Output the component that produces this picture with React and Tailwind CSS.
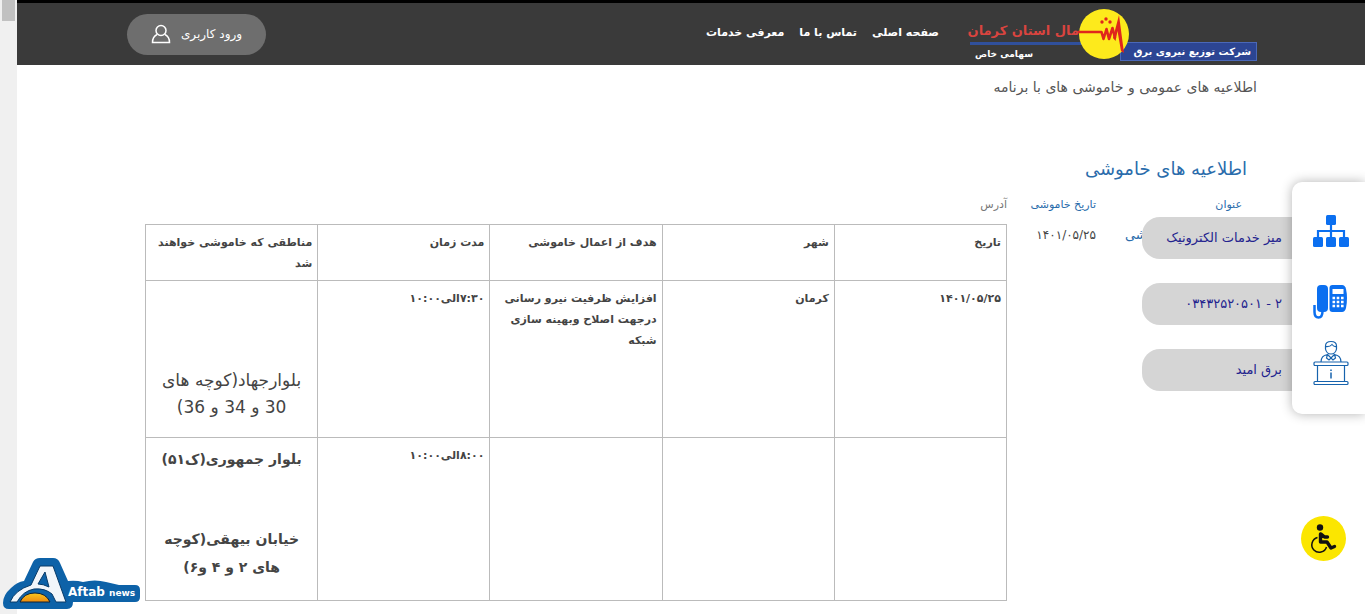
const navLinks = ["صفحه اصلی", "تماس با ما", "معرفی خدمات"];

const columns = [
  "تاریخ",
  "شهر",
  "هدف از اعمال خاموشی",
  "مدت زمان",
  "مناطقی که خاموشی خواهند شد",
];

const Logo = () => (
  <svg width="289" height="53" viewBox="968 7 289 53" role="img" aria-label="شرکت توزیع نیروی برق شمال استان کرمان">
    <rect x="1120.5" y="41.5" width="136" height="18" fill="#2c4593" stroke="#4a68b8" />
    <rect x="970" y="41" width="113" height="3" fill="#30509c" />
    <circle cx="1104" cy="33" r="25" fill="#fdea1c" />
    <path
      d="M1078 31H1101.500L1103.500 38L1106.500 28L1109 38L1112.500 27L1115 37"
      fill="none"
      stroke="#e0261c"
      strokeWidth="2.600"
      strokeLinejoin="round"
    />
    <path d="M1119 14L1124 52L1121 50L1117.500 30L1115.500 40L1113 37Z" fill="#e0261c" />
    <circle cx="1102" cy="21" r="1.700" fill="#e0261c" />
    <circle cx="1106" cy="18" r="1.700" fill="#e0261c" />
    <circle cx="1110" cy="21" r="1.700" fill="#e0261c" />
    <text x="1079" y="34" fill="#d9443f" fontSize="13" fontWeight="bold">مال استان کرمان</text>
    <text x="1251" y="54" fill="#fff" fontSize="10" fontWeight="bold">شرکت توزیع نیروی برق</text>
    <text x="1033" y="56" fill="#fff" fontSize="9" fontWeight="bold">سهامی خاص</text>
  </svg>
);

const UserIcon = () => (
  <svg width="20" height="20" viewBox="0 0 20 20" fill="none" stroke="#fff" strokeWidth="1.500">
    <circle cx="10" cy="6.500" r="5" />
    <path d="M6 10.500C3 12 1.500 14.500 1.500 18.500H18.500C18.500 14.500 17 12 14 10.500" />
  </svg>
);

const SitemapIcon = () => (
  <svg width="36" height="32" viewBox="0 0 36 32" fill="#0b6ff0">
    <rect x="13" y="0" width="10" height="10" rx="1.500" />
    <rect x="0" y="22" width="10" height="10" rx="1.500" />
    <rect x="13" y="22" width="10" height="10" rx="1.500" />
    <rect x="26" y="22" width="10" height="10" rx="1.500" />
    <path d="M5 23V16H31V23M18 9V23" fill="none" stroke="#0b6ff0" strokeWidth="2.200" />
  </svg>
);

const PhoneIcon = () => (
  <svg width="36" height="36" viewBox="0 0 36 36" fill="#0b6ff0">
    <rect x="4" y="2" width="11" height="27" rx="4" />
    <path d="M16.500 5Q16.500 2 19.500 2H29Q32 2 33 6Q35 15 33 25Q32 29 29 29H19.500Q16.500 29 16.500 26Z" />
    <rect x="19.500" y="6" width="11" height="5" fill="#fff" />
    <path
      d="M19.500 15h2.600M23.700 15h2.600M28 15h2.600M19.500 19h2.600M23.700 19h2.600M28 19h2.600M19.500 23h2.600M23.700 23h2.600M28 23h2.600"
      stroke="#fff"
      strokeWidth="2.600"
    />
    <path d="M1.500 22V29Q1.500 34.500 5.500 34.500T9.500 28" fill="none" stroke="#0b6ff0" strokeWidth="2.500" />
  </svg>
);

const DeskIcon = () => (
  <svg width="36" height="46" viewBox="0 0 36 46" fill="none" stroke="#1763ad" strokeWidth="1.200">
    <path d="M12.500 6Q12.500 1.500 18 1.500T23.500 6V9Q22.500 14 18 14T12.500 9ZM12.500 6.500Q17 7 19 4.500Q21 7 23.500 6.500" />
    <path d="M8 22Q8 15.500 14.500 14.500L18 18L21.500 14.500Q28 15.500 28 22M14.500 14.500L13.500 18L16 20L18 18L20 20L22.500 18L21.500 14.500" />
    <rect x="1" y="22" width="34" height="3.500" rx="1" />
    <path d="M4.500 25.500V41.500M31.500 25.500V41.500" />
    <rect x="1" y="41.500" width="34" height="3" rx="1" />
    <path d="M18 32.500V38.500M18 29.500V31" strokeWidth="1.500" />
  </svg>
);

const WheelchairIcon = () => (
  <svg width="45" height="45" viewBox="0 0 45 45">
    <circle cx="22.500" cy="22.500" r="22.500" fill="#fbe600" />
    <circle cx="19" cy="11.500" r="3.200" fill="#111" />
    <path d="M16.500 21.500A7.500 7.500 0 1 0 25.500 31" fill="none" stroke="#111" strokeWidth="1.500" />
    <path
      d="M19.500 18V26H26L30 32L33.500 30.500M20 18L23.500 21H26.500"
      fill="none"
      stroke="#111"
      strokeWidth="3.400"
      strokeLinecap="round"
      strokeLinejoin="round"
    />
  </svg>
);

const AftabLogo = () => (
  <svg width="138" height="54" viewBox="0 0 138 54" role="img" aria-label="Aftab news">
    <defs>
      <linearGradient id="sun" x1="0" y1="0" x2="0" y2="1">
        <stop offset="0" stopColor="#f8c81e" />
        <stop offset="1" stopColor="#ee8a10" />
      </linearGradient>
    </defs>
    <path
      d="M30 5Q32 1 37 1H50Q55 1 57 6L65 24Q73 23 80 25Q92 22 103 25L116 28H132Q137 28 137 33V40Q137 45 132 45H70Q70 52 64 52H6Q0 52 0 46Q0 38 8 31Q14 25 21 24Z"
      fill="#0d62a8"
    />
    <path
      d="M37 9H50L63 45H53L49 37Q42 31 31 32Q20 34 14 45H7Q12 33 28 28ZM42 15L35 27Q40 27 46 30Z"
      fill="#f2f6fa"
      fillRule="evenodd"
      stroke="#083b68"
      strokeWidth="1"
    />
    <path d="M17 45Q21 36 32 36T47 45Z" fill="url(#sun)" stroke="#123" />
    <text x="65" y="39" fill="#fff" fontSize="12" fontWeight="bold" direction="ltr">Aftab</text>
    <text x="106" y="39" fill="#fff" fontSize="9" fontWeight="bold" direction="ltr">news</text>
  </svg>
);

const services = ["میز خدمات الکترونیک", "۲ - ۰۳۴۳۲۵۲۰۵۰۱", "برق امید"];

const Header = () => (
  <header className="flex h-[65px] items-center justify-between border-t-[3px] border-black bg-[#3a3a3a] pr-[108px] pl-[110px]">
    <div className="flex items-center gap-[29px]">
      <a href="#home">
        <Logo />
      </a>
      <nav className="flex gap-[15px] pb-[2px] text-[11px] font-bold text-white">
        {navLinks.map((link) => (
          <a key={link} href="#nav">
            {link}
          </a>
        ))}
      </nav>
    </div>
    <button className="flex h-[41px] w-[139px] items-center justify-center gap-[10px] rounded-full bg-[#6e6e6e] text-[12px] text-white">
      <span>ورود کاربری</span>
      <UserIcon />
    </button>
  </header>
);

const OutageTable = () => (
  <table className="w-full table-fixed border-collapse text-right text-[11px] leading-[21px] font-bold text-[#444]">
    <thead>
      <tr className="h-14 align-top">
        {columns.map((column) => (
          <th key={column} className="border border-[#bbb] px-[5px] pt-[7px]">
            {column}
          </th>
        ))}
      </tr>
    </thead>
    <tbody>
      <tr className="h-[157px] align-top">
        <td className="border border-[#bbb] px-[5px] pt-[7px]">۱۴۰۱/۰۵/۲۵</td>
        <td className="border border-[#bbb] px-[5px] pt-[7px]">کرمان</td>
        <td className="border border-[#bbb] px-[5px] pt-[7px]">
          افزایش ظرفیت نیرو رسانی درجهت اصلاح وبهینه سازی شبکه
        </td>
        <td className="border border-[#bbb] px-[5px] pt-[7px]">۷:۳۰الی۱۰:۰۰</td>
        <td className="border border-[#bbb] px-[5px] pb-4 text-center align-bottom text-[17px] leading-[27px] font-normal">
          بلوارجهاد(کوچه های 30 و 34 و 36)
        </td>
      </tr>
      <tr className="h-[163px] align-top">
        <td className="border border-[#bbb]"></td>
        <td className="border border-[#bbb]"></td>
        <td className="border border-[#bbb]"></td>
        <td className="border border-[#bbb] px-[5px] pt-[7px]">۸:۰۰الی۱۰:۰۰</td>
        <td className="border border-[#bbb] px-[5px] pt-[7px] text-center text-[14px] leading-[28px]">
          <p className="mb-[52px]">بلوار جمهوری(ک۵۱)</p>
          <p>خیابان بیهقی(کوچه های ۲ و ۴ و۶)</p>
        </td>
      </tr>
    </tbody>
  </table>
);

const ServicePanel = () => (
  <aside className="absolute top-[182px] right-0 flex items-start">
    <div className="z-10 flex h-[232px] w-[73px] flex-col items-center rounded-l-[10px] bg-white pt-[33px] pl-1 shadow-[0_0_12px_rgba(0,0,0,0.3)]">
      <div className="flex h-[68px] items-start">
        <SitemapIcon />
      </div>
      <div className="flex h-[57px] items-start">
        <PhoneIcon />
      </div>
      <DeskIcon />
    </div>
    <div className="flex flex-col gap-6 pt-[35px]">
      {services.map((label) => (
        <a
          key={label}
          href="#service"
          className="flex h-[42px] w-[150px] items-center rounded-l-[18px] bg-[#d5d5d5] pr-[10px] text-[13px] whitespace-nowrap text-[#23238e]"
        >
          {label}
        </a>
      ))}
    </div>
  </aside>
);

const App = () => {
  return (
    <div dir="ltr" className="relative flex min-h-screen overflow-hidden bg-white font-['DejaVu_Sans',sans-serif]">
      <div className="w-[17px] shrink-0 bg-[#f0f0f0] px-[2px]">
        <div className="h-[21px] bg-[#c1c1c1]"></div>
      </div>

      <div dir="rtl" className="min-w-0 flex-1">
        <Header />
        <main>
          <p className="px-[108px] pt-2 text-[14px] leading-[28px] text-[#555]">
            اطلاعیه های عمومی و خاموشی های با برنامه
          </p>
          <div className="pt-[52px] pr-[118px] pl-[123px]">
            <h1 className="text-[18px] leading-[32px] text-[#2a6cab]">اطلاعیه های خاموشی</h1>
            <table className="mt-[9px] w-full table-fixed text-right text-[11px] leading-[22px]">
              <colgroup>
                <col className="w-[146px]" />
                <col className="w-[89px]" />
                <col />
              </colgroup>
              <thead>
                <tr className="whitespace-nowrap text-[#2a6cab]">
                  <th className="px-[5px] pb-2 font-normal">عنوان</th>
                  <th className="px-[5px] pb-2 font-normal">تاریخ خاموشی</th>
                  <th className="px-[5px] pb-2 font-normal text-[#777]">آدرس</th>
                </tr>
              </thead>
              <tbody>
                <tr className="align-top">
                  <td className="px-[5px] text-[13px]">
                    <a href="#outage" className="whitespace-nowrap text-[#2a6cab]">
                      اطلاعیه های خاموشی
                    </a>
                  </td>
                  <td className="px-[5px] text-[12px] text-[#444]">۱۴۰۱/۰۵/۲۵</td>
                  <td className="px-[5px]">
                    <OutageTable />
                  </td>
                </tr>
              </tbody>
            </table>
          </div>
        </main>
        <ServicePanel />
        <button aria-label="دسترسی" className="absolute right-[19px] bottom-[53px]">
          <WheelchairIcon />
        </button>
        <div className="absolute bottom-[3px] left-[3px]">
          <AftabLogo />
        </div>
      </div>
    </div>
  );
};

export default App;
